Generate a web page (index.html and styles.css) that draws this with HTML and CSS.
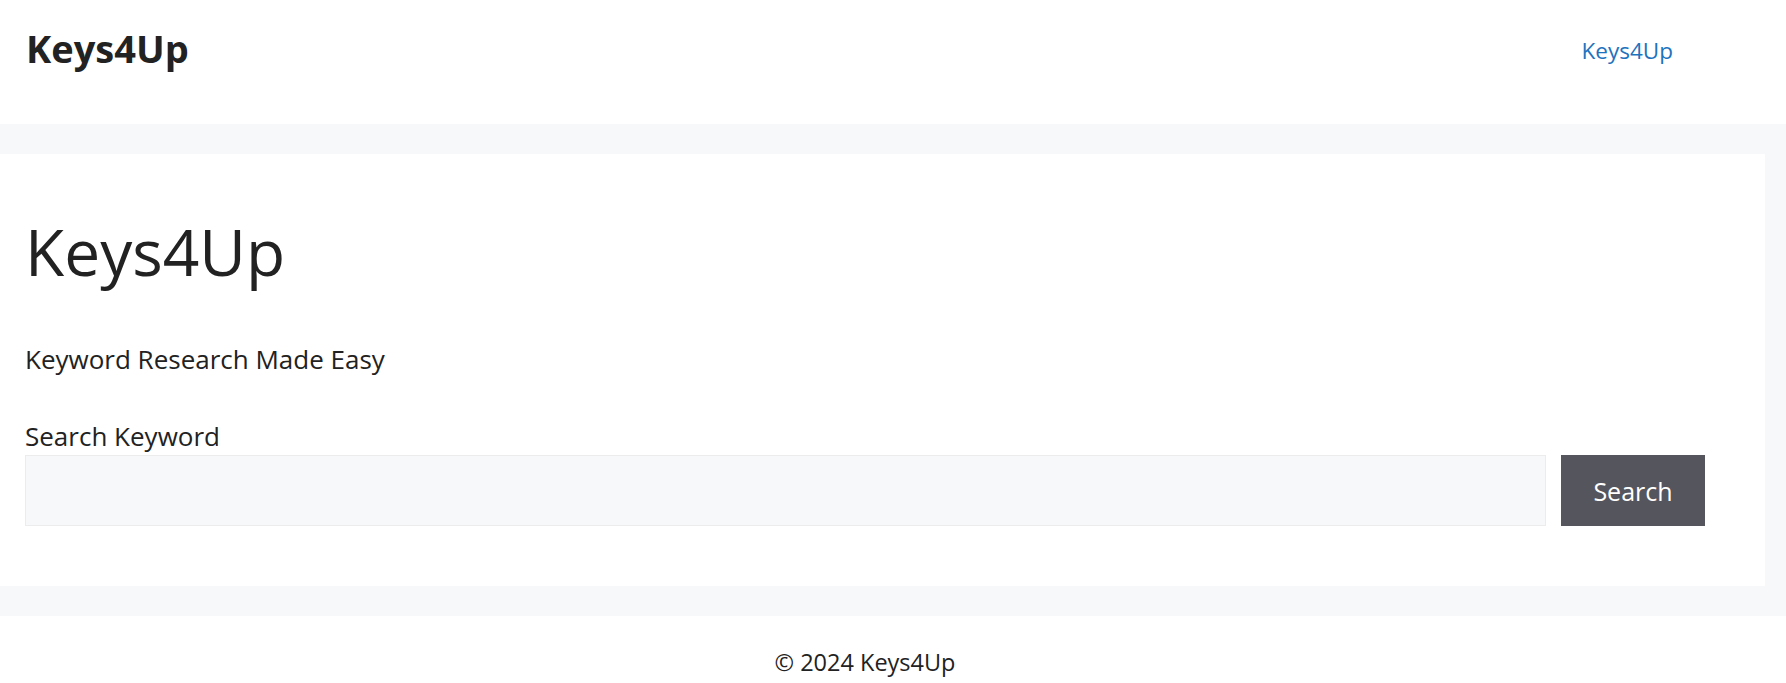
FILE: index.html
```html
<!DOCTYPE html>
<html lang="en">
<head>
<meta charset="utf-8">
<title>Keys4Up</title>
<link rel="stylesheet" href="styles.css">
</head>
<body>
<header class="site-header">
  <div class="site-title">Keys4Up</div>
  <nav class="main-nav"><a href="#" class="nav-link">Keys4Up</a></nav>
</header>
<main class="site-main">
  <section class="card">
    <h1 class="page-title">Keys4Up</h1>
    <p class="tagline">Keyword Research Made Easy</p>
    <form class="search-form" onsubmit="return false;">
      <label class="search-label" for="kw">Search Keyword</label>
      <div class="search-row">
        <input class="search-input" id="kw" type="text">
        <button class="search-button" type="submit">Search</button>
      </div>
    </form>
  </section>
</main>
<footer class="site-footer">
  <div class="footer-text">© 2024 Keys4Up</div>
</footer>
</body>
</html>
```
FILE: styles.css
```css
* { box-sizing: border-box; }
html, body { margin: 0; padding: 0; }
body {
  font-family: "Open Sans", "Noto Sans", sans-serif;
  color: #222222;
  background: #ffffff;
  font-size: 26px;
}
.site-header {
  height: 124px;
  padding: 0 113px 26px 26px;
  display: flex;
  align-items: center;
  justify-content: space-between;
  background: #ffffff;
}
.site-title {
  font-size: 38px;
  font-weight: 700;
  line-height: 1.2;
  color: #222222;
}
.nav-link {
  font-size: 22.5px;
  color: #1e73be;
  text-decoration: none;
  line-height: 1.2;
}
.site-main {
  background: #f7f8f9;
  padding: 30px 21px 30px 0;
}
.card {
  background: #ffffff;
  padding: 58px 60px 60px 25px;
}
.page-title {
  margin: 0;
  font-size: 64px;
  font-weight: 400;
  line-height: 79px;
}
.tagline {
  margin: 49px 0 0;
  font-size: 26px;
  line-height: 38px;
}
.search-form { margin: 39px 0 0; }
.search-label {
  display: block;
  font-size: 26px;
  line-height: 38px;
}
.search-row {
  display: flex;
  gap: 15px;
}
.search-input {
  flex: 1;
  height: 71px;
  background: #f7f8f9;
  border: 1px solid #ececec;
  margin: 0;
  padding: 0 16px;
  font: inherit;
}
.search-button {
  width: 144px;
  height: 71px;
  background: #55555e;
  color: #ffffff;
  border: 0;
  margin: 0;
  font-family: inherit;
  font-size: 25px;
}
.site-footer {
  height: 67px;
  padding: 28px 56px 0 0;
  text-align: center;
}
.footer-text {
  font-size: 23.5px;
  line-height: 36px;
}
```
